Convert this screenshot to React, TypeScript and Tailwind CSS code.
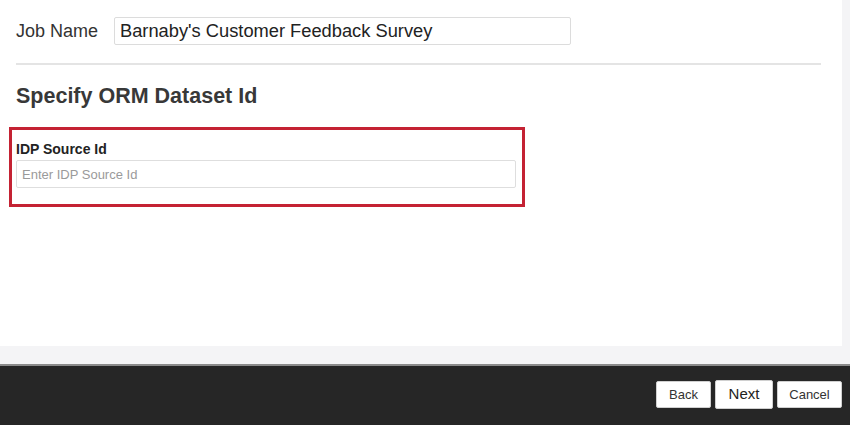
import React from 'react';

const font = { fontFamily: '"Liberation Sans", Arial, sans-serif' };

export default function App() {
  return (
    <div className="w-[850px] h-[425px] flex flex-col bg-[#f4f4f6] overflow-hidden" style={font}>
      {/* main panel */}
      <div className="w-[842px] h-[346px] bg-white pt-[17px] pl-[16px]">
        <div className="flex items-center h-[28px]">
          <span className="text-[18px] text-[#333] w-[98px]">Job Name</span>
          <input
            readOnly
            value="Barnaby's Customer Feedback Survey"
            className="w-[457px] h-[28px] border border-[#dcdcdc] rounded-[2px] px-[5px] text-[18.3px] text-[#222] outline-none"
          />
        </div>

        <div className="mt-[18px] w-[805px] h-[2px] bg-[#e4e4e4]" />

        <h2 className="mt-[19px] text-[21.5px] font-bold text-[#383838] leading-[24px]">Specify ORM Dataset Id</h2>

        {/* highlighted field */}
        <div className="mt-[19px] -ml-[7px] w-[516px] h-[80px] border-[3px] border-[#c42233] pl-[4px] pt-[11px]">
          <div className="text-[14px] font-bold text-[#222] leading-[16px]">IDP Source Id</div>
          <input
            placeholder="Enter IDP Source Id"
            className="mt-[3px] w-[500px] h-[28px] border border-[#dedede] rounded-[2px] px-[5px] text-[13px] text-[#222] placeholder:text-[#9a9a9a] outline-none"
          />
        </div>
      </div>

      <div className="h-[18px]" />

      {/* footer */}
      <div className="flex-1 bg-[#262626] border-t-2 border-[#8a8a8a] flex items-center justify-end gap-[4px] pr-[8px] pb-[2px]">
        <button className="w-[55px] h-[27px] bg-white border border-[#d0d0d0] rounded-[2px] text-[13px] text-[#333]">Back</button>
        <button className="w-[58px] h-[29px] bg-white border border-[#d0d0d0] rounded-[2px] text-[15px] text-[#222]">Next</button>
        <button className="w-[65px] h-[27px] bg-white border border-[#d0d0d0] rounded-[2px] text-[13px] text-[#333]">Cancel</button>
      </div>
    </div>
  );
}
